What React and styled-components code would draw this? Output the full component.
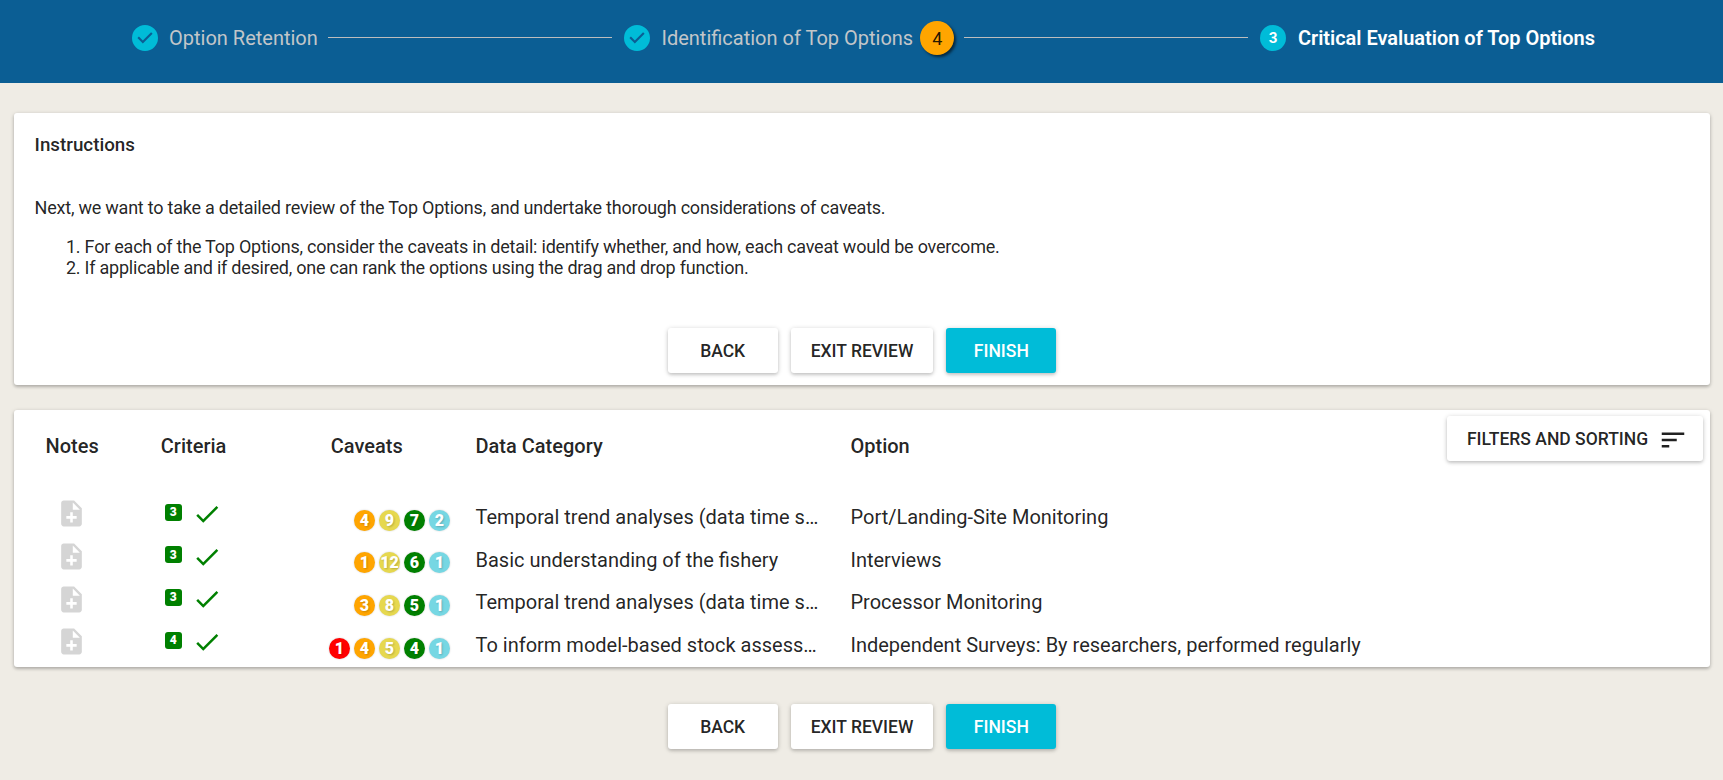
import React from "react";
import styled, { createGlobalStyle } from "styled-components";

const GlobalStyle = createGlobalStyle`
  * { box-sizing: border-box; }
  body {
    margin: 0;
    background: #efece5;
    color: rgba(0, 0, 0, 0.87);
    font-family: Roboto, "Liberation Sans", sans-serif;
  }
`;

const Page = styled.div`
  min-height: 780px;
  display: flex;
  flex-direction: column;
`;

const Stepper = styled.header`
  height: 83px;
  padding: 0 128px 7px 132px;
  display: flex;
  align-items: center;
  background: #0b5e94;
`;

const Step = styled.div`
  display: flex;
  align-items: center;
  white-space: nowrap;

  &:first-child svg {
    margin-right: 11px;
  }
`;

const StepIcon = styled.svg`
  width: 26px;
  height: 26px;
  margin-right: 12px;
  flex: none;
  fill: #00bcd8;
`;

const StepNumber = styled.text`
  fill: #fff;
  font-size: 14px;
  font-weight: 700;
  text-anchor: middle;
`;

const StepLabel = styled.span`
  font-size: 20px;
  line-height: 28px;
  font-weight: ${(p) => (p.$active ? 600 : 400)};
  letter-spacing: ${(p) => (p.$active ? "-0.02px" : "0")};
  color: ${(p) => (p.$active ? "#fff" : "#c2c6c9")};
`;

const StepBadge = styled.span`
  width: 34px;
  height: 34px;
  margin-left: 7px;
  border-radius: 50%;
  display: flex;
  align-items: center;
  justify-content: center;
  background: #ffa500;
  color: rgba(0, 0, 0, 0.87);
  font-size: 18px;
  box-shadow: 2px 2px 3px rgba(0, 0, 0, 0.6);
`;

const Connector = styled.div`
  flex: 1;
  height: 1px;
  margin: 0 12px 1px 10px;
  background: #bdbdbd;
`;

const Card = styled.section`
  margin: 0 13px 0 14px;
  border-radius: 3px;
  background: #fff;
  box-shadow: 0 1px 4px rgba(0, 0, 0, 0.2), 0 2px 3px rgba(0, 0, 0, 0.14);
`;

const InstructionsCard = styled(Card)`
  height: 272px;
  margin-top: 30px;
  padding: 21px 20.6px 12px;
  display: flex;
  flex-direction: column;
  font-size: 18px;
  line-height: 21px;
  letter-spacing: -0.23px;
`;

const CardTitle = styled.h2`
  margin: 0 0 41px;
  font-size: 18.8px;
  line-height: 22px;
  font-weight: 500;
  letter-spacing: 0;
`;

const Paragraph = styled.p`
  margin: 0 0 18px;
`;

const Steps = styled.ol`
  margin: 0;
  padding-left: 50px;
`;

const Actions = styled.div`
  margin-top: auto;
  display: flex;
  justify-content: center;
  gap: 13px;
`;

const FooterActions = styled(Actions)`
  margin-top: 37px;
  padding-left: 1px;
`;

const Button = styled.button`
  height: 45px;
  min-width: 110px;
  padding: 0 20px;
  border: 0;
  border-radius: 3px;
  display: flex;
  align-items: center;
  justify-content: center;
  background: ${(p) => (p.$primary ? "#00bcd8" : "#fff")};
  color: ${(p) => (p.$primary ? "#fff" : "rgba(0, 0, 0, 0.87)")};
  font: 500 17.5px Roboto, "Liberation Sans", sans-serif;
  white-space: nowrap;
  box-shadow: 0 1px 5px rgba(0, 0, 0, 0.2), 0 2px 3px rgba(0, 0, 0, 0.1);
`;

const TableCard = styled(Card)`
  position: relative;
  height: 257px;
  margin-top: 25px;
`;

const FilterButton = styled(Button)`
  position: absolute;
  top: 6px;
  right: 7px;
  width: 256px;
  padding: 0 19px 0 20px;
`;

const ButtonIcon = styled.svg`
  width: 30px;
  height: 30px;
  margin: 2px -4px 0 10px;
  flex: none;
  fill: currentColor;
`;

const Row = styled.div`
  height: 42.65px;
  display: grid;
  grid-template-columns: 115.3px 170px 144.7px 375px 1fr;
  padding-left: 31.5px;
  align-items: center;
`;

const HeaderRow = styled(Row)`
  height: 86.2px;
  padding-bottom: 13.7px;
  font-size: 20px;
  font-weight: 500;
`;

const TextCell = styled.div`
  padding: 0 30px 0.6px 0;
  font-size: 20px;
  line-height: 28px;
  white-space: nowrap;
`;

const NoteIcon = styled.svg`
  width: 31px;
  height: 31px;
  margin: 0 0 7.4px 10.6px;
  fill: #d5d5d5;
`;

const CriteriaCell = styled.div`
  display: flex;
  align-items: center;
  padding: 0 0 9.6px 4px;
`;

const CriteriaBadge = styled.span`
  width: 17px;
  height: 17px;
  margin-bottom: 1px;
  border-radius: 3px;
  display: flex;
  align-items: center;
  justify-content: center;
  background: #008000;
  color: #fff;
  font-size: 12px;
  font-weight: 900;
`;

const CheckIcon = styled.svg`
  width: 30px;
  height: 30px;
  margin: 3px 0 0 10px;
  fill: #008000;
`;

const CaveatCell = styled.div`
  display: flex;
  justify-content: flex-end;
  gap: 4px;
  padding: 5.6px 25.5px 0 0;
  margin-left: -20px;
`;

const tones = {
  red: "#ff0000",
  orange: "#ffa500",
  yellow: "#e6d84f",
  green: "#008000",
  blue: "#76d7e3",
};

const Caveat = styled.span`
  width: 21px;
  height: 21px;
  border-radius: 50%;
  display: flex;
  align-items: center;
  justify-content: center;
  background: ${(p) => tones[p.$tone]};
  color: #fff;
  font-size: 16px;
  font-weight: 900;
  text-shadow: 1px 1px 2px rgba(0, 0, 0, 0.2);
  box-shadow: 0 0 2px rgba(0, 0, 0, 0.2);
`;

const rows = [
  {
    criteria: 3,
    caveats: [["orange", 4], ["yellow", 9], ["green", 7], ["blue", 2]],
    category: "Temporal trend analyses (data time s…",
    option: "Port/Landing-Site Monitoring",
  },
  {
    criteria: 3,
    caveats: [["orange", 1], ["yellow", 12], ["green", 6], ["blue", 1]],
    category: "Basic understanding of the fishery",
    option: "Interviews",
  },
  {
    criteria: 3,
    caveats: [["orange", 3], ["yellow", 8], ["green", 5], ["blue", 1]],
    category: "Temporal trend analyses (data time s…",
    option: "Processor Monitoring",
  },
  {
    criteria: 4,
    caveats: [["red", 1], ["orange", 4], ["yellow", 5], ["green", 4], ["blue", 1]],
    category: "To inform model-based stock assess…",
    option: "Independent Surveys: By researchers, performed regularly",
  },
];

function DoneIcon() {
  return (
    <StepIcon viewBox="0 0 24 24">
      <path d="M12 0a12 12 0 1 0 0 24 12 12 0 0 0 0-24zm-2 17l-5-5 1.4-1.4 3.6 3.6 7.6-7.6L19 8l-9 9z" />
    </StepIcon>
  );
}

function ReviewButtons() {
  return (
    <>
      <Button>BACK</Button>
      <Button>EXIT REVIEW</Button>
      <Button $primary>FINISH</Button>
    </>
  );
}

export default function App() {
  return (
    <Page>
      <GlobalStyle />
      <Stepper>
        <Step>
          <DoneIcon />
          <StepLabel>Option Retention</StepLabel>
        </Step>
        <Connector />
        <Step>
          <DoneIcon />
          <StepLabel>Identification of Top Options</StepLabel>
          <StepBadge>4</StepBadge>
        </Step>
        <Connector />
        <Step>
          <StepIcon viewBox="0 0 24 24">
            <circle cx="12" cy="12" r="12" />
            <StepNumber x="12" y="17">3</StepNumber>
          </StepIcon>
          <StepLabel $active>Critical Evaluation of Top Options</StepLabel>
        </Step>
      </Stepper>

      <InstructionsCard>
        <CardTitle>Instructions</CardTitle>
        <Paragraph>
          Next, we want to take a detailed review of the Top Options, and undertake thorough
          considerations of caveats.
        </Paragraph>
        <Steps>
          <li>
            For each of the Top Options, consider the caveats in detail: identify whether, and how,
            each caveat would be overcome.
          </li>
          <li>If applicable and if desired, one can rank the options using the drag and drop function.</li>
        </Steps>
        <Actions>
          <ReviewButtons />
        </Actions>
      </InstructionsCard>

      <TableCard>
        <HeaderRow>
          <span>Notes</span>
          <span>Criteria</span>
          <span>Caveats</span>
          <span>Data Category</span>
          <span>Option</span>
        </HeaderRow>
        {rows.map((row) => (
          <Row key={row.option}>
            <NoteIcon viewBox="0 0 24 24">
              <path d="M14 2H6c-1.1 0-1.99.9-1.99 2L4 20c0 1.1.89 2 1.99 2H18c1.1 0 2-.9 2-2V8l-6-6zm2 14h-3v3h-2v-3H8v-2h3v-3h2v3h3v2zm-3-7V3.500L18.500 9H13z" />
            </NoteIcon>
            <CriteriaCell>
              <CriteriaBadge>{row.criteria}</CriteriaBadge>
              <CheckIcon viewBox="0 0 24 24">
                <path d="M9 16.170L4.830 12l-1.420 1.410L9 19 21 7l-1.410-1.410z" />
              </CheckIcon>
            </CriteriaCell>
            <CaveatCell>
              {row.caveats.map(([tone, count]) => (
                <Caveat key={tone} $tone={tone}>
                  {count}
                </Caveat>
              ))}
            </CaveatCell>
            <TextCell>{row.category}</TextCell>
            <TextCell>{row.option}</TextCell>
          </Row>
        ))}
        <FilterButton>
          FILTERS AND SORTING
          <ButtonIcon viewBox="0 0 24 24">
            <path d="M3 18h6v-2H3v2zM3 6v2h18V6H3zm0 7h12v-2H3v2z" />
          </ButtonIcon>
        </FilterButton>
      </TableCard>

      <FooterActions>
        <ReviewButtons />
      </FooterActions>
    </Page>
  );
}
